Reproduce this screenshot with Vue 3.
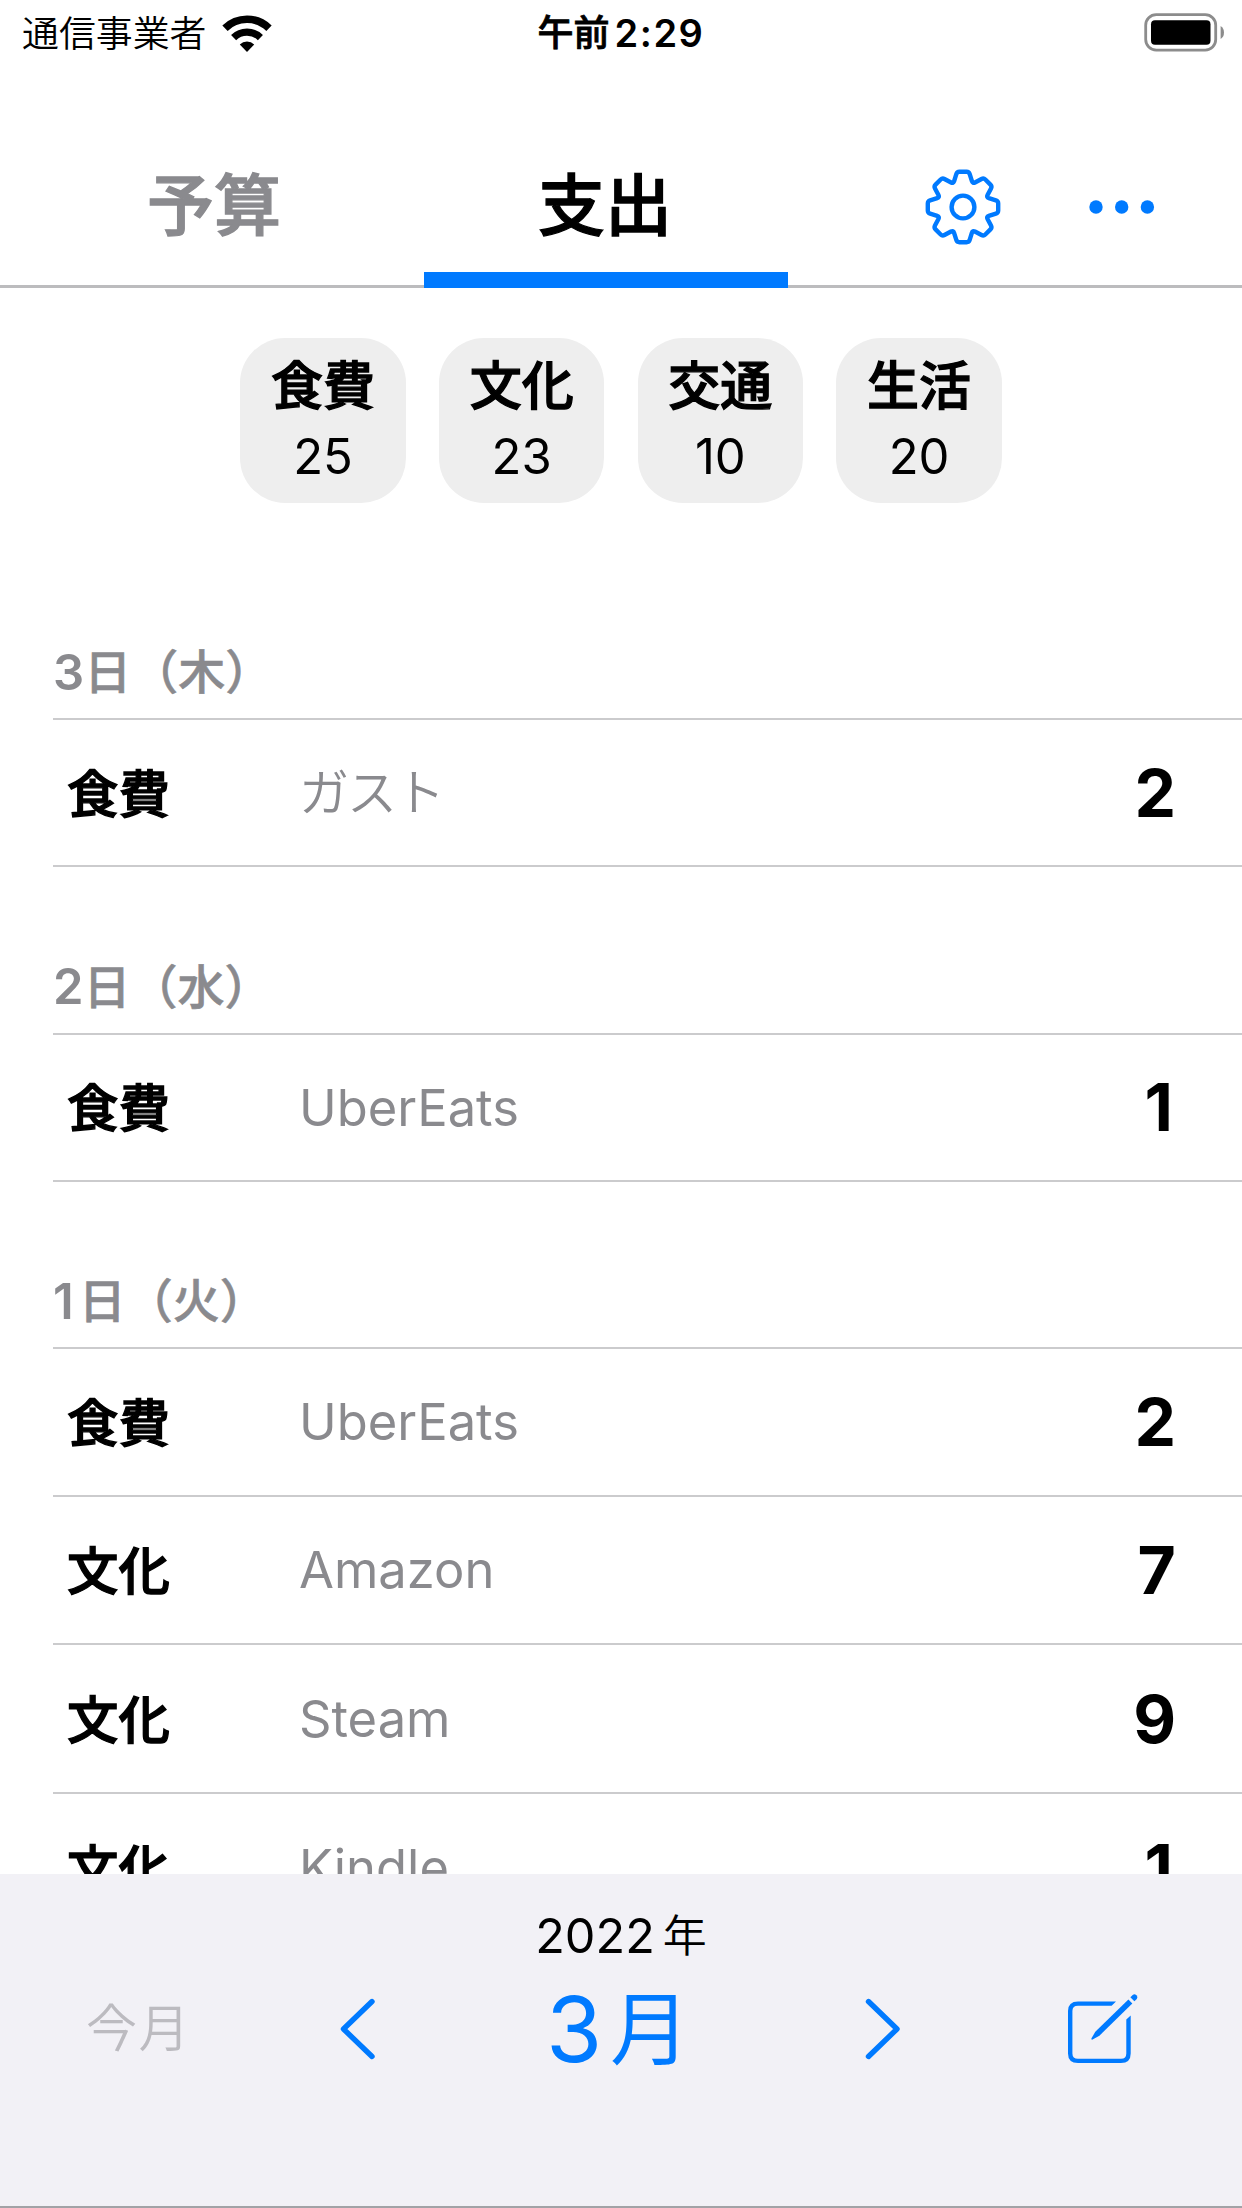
<script setup>
const chips = [
  { name: '食費', total: 25 },
  { name: '文化', total: 23 },
  { name: '交通', total: 10 },
  { name: '生活', total: 20 },
]

const days = [
  { day: '3', week: '木', items: [{ category: '食費', memo: 'ガスト', kana: true, amount: 2 }] },
  { day: '2', week: '水', items: [{ category: '食費', memo: 'UberEats', amount: 1 }] },
  {
    day: '1',
    week: '火',
    items: [
      { category: '食費', memo: 'UberEats', amount: 2 },
      { category: '文化', memo: 'Amazon', amount: 7 },
      { category: '文化', memo: 'Steam', amount: 9 },
      { category: '文化', memo: 'Kindle', amount: 1 },
    ],
  },
]

// Closed outline through the gear's corners, each one rounded off by a quadratic curve
function gearPath() {
  const corners = []
  for (let k = 0; k < 8; k++) {
    const a = (k * Math.PI) / 4
    for (const [x, y, r] of [[-6, -35.2, 2.4], [6, -35.2, 2.4], [9.7, -23.3, 2.6]]) {
      corners.push([x * Math.cos(a) - y * Math.sin(a), x * Math.sin(a) + y * Math.cos(a), r])
    }
  }
  const toward = (p, q) => {
    const d = Math.hypot(q[0] - p[0], q[1] - p[1])
    return [p[0] + ((q[0] - p[0]) * p[2]) / d, p[1] + ((q[1] - p[1]) * p[2]) / d]
  }
  const f = (p) => `${p[0].toFixed(2)} ${p[1].toFixed(2)}`
  const n = corners.length
  return (
    corners
      .map((p, i) => {
        const start = toward(p, corners[(i + n - 1) % n])
        const end = toward(p, corners[(i + 1) % n])
        return `${i ? 'L' : 'M'}${f(start)}Q${f(p)} ${f(end)}`
      })
      .join('') + 'Z'
  )
}
const gear = gearPath()
</script>

<template>
  <div class="screen">
    <header class="status">
      <div class="carrier">
        <span class="carrier-name">通信事業者</span>
        <svg class="wifi" width="50" height="38" viewBox="0 0 50 38">
          <path d="M3 13.2A31.5 31.5 0 0 1 47 13.2" fill="none" stroke="#000" stroke-width="7.6" />
          <path d="M11.6 22.6A19 19 0 0 1 38.4 22.6" fill="none" stroke="#000" stroke-width="7.2" />
          <path d="M25 37L17.8 29.4A10.4 10.4 0 0 1 32.2 29.4Z" />
        </svg>
      </div>
      <div class="clock"><span class="ampm">午前</span><span>2:29</span></div>
      <svg class="battery" width="82" height="40" viewBox="0 0 82 40">
        <rect x="1.7" y="1.7" width="70" height="35.4" rx="10.5" fill="none" stroke="#8c8c8c" stroke-width="2.8" />
        <rect x="7" y="7.2" width="59.5" height="24.6" rx="4" />
        <path d="M76.6 13Q80 15 80 19.5T76.6 26Z" fill="#8c8c8c" />
      </svg>
    </header>

    <nav class="tabs">
      <div class="tab heavy">予算</div>
      <div class="tab heavy active">支出</div>
      <div class="tools">
        <svg width="78" height="78" viewBox="-39 -39 78 78" fill="none" stroke="#007aff" stroke-width="4.4">
          <path :d="gear" stroke-linejoin="round" />
          <circle r="11.4" />
        </svg>
        <svg class="dots" width="66" height="14" viewBox="0 0 66 14" fill="#007aff">
          <circle cx="7" cy="7" r="6.7" />
          <circle cx="32.7" cy="7" r="6.7" />
          <circle cx="58.4" cy="7" r="6.7" />
        </svg>
      </div>
    </nav>

    <div class="chips">
      <div v-for="c in chips" :key="c.name" class="chip">
        <div class="chip-name heavy">{{ c.name }}</div>
        <div class="chip-total">{{ c.total }}</div>
      </div>
    </div>

    <main class="list">
      <section v-for="d in days" :key="d.day" class="day">
        <h2 class="date">
          <span class="num" :class="{ one: d.day === '1' }">{{ d.day }}</span>
          <span class="ja">日（{{ d.week }}）</span>
        </h2>
        <ul class="rows">
          <li v-for="(it, i) in d.items" :key="i" class="row">
            <span class="category heavy">{{ it.category }}</span>
            <span class="memo" :class="{ kana: it.kana }">{{ it.memo }}</span>
            <span class="amount" :class="{ one: it.amount === 1 }">{{ it.amount }}</span>
          </li>
        </ul>
      </section>
    </main>

    <footer class="bar">
      <div class="year"><span>2022</span><span class="year-ja">年</span></div>
      <div class="controls">
        <span class="today">今月</span>
        <svg class="prev" width="38" height="64" viewBox="0 0 38 64">
          <path d="M33 4.5L4.5 32L33 59.5" />
        </svg>
        <div class="month"><span>3</span><span class="month-ja">月</span></div>
        <svg class="next" width="38" height="64" viewBox="0 0 38 64">
          <path d="M4.5 4.5L33 32L4.5 59.5" />
        </svg>
        <svg class="compose" width="74" height="72" viewBox="0 0 74 72">
          <path d="M50 8.4H12Q2 8.4 2 18V60.5Q2 70 12 70H55Q64.7 70 64.7 60.5V22.5L60.3 26.6V60.5Q60.3 65.8 55 65.8H12Q6.4 65.8 6.4 60.5V18Q6.4 12.7 12 12.7H45.6Z" />
          <path d="M62.4 6.6L66.3 10.5L33.4 42.7L26.6 46.6Q25 47 25.5 45.3L29.3 38.8Z" />
          <path d="M64.4 4.3L66.7 2Q68.5 0.6 70.4 2.2Q72.3 4 70.8 5.9L68.4 8.3Z" />
        </svg>
      </div>
    </footer>
  </div>
</template>

<style>
body {
  background: #fff;
}
</style>

<style scoped>
.screen {
  width: 1242px;
  height: 2208px;
  display: flex;
  flex-direction: column;
  overflow: hidden;
  background: #fff;
  color: #000;
  font-family: Inter, "Noto Sans CJK JP", sans-serif;
  white-space: nowrap;
}
.heavy {
  font-weight: 500;
  -webkit-text-stroke: 1.3px currentColor;
}

.status {
  height: 66px;
  display: grid;
  grid-template-columns: 1fr auto 1fr;
  align-items: center;
  flex: none;
}
.carrier {
  display: flex;
  align-items: center;
  padding-left: 22px;
  gap: 16px;
}
.carrier-name {
  font-size: 36.9px;
  line-height: 64px;
  font-weight: 350;
  padding-top: 1px;
}
.wifi {
  margin-top: 1px;
}
.clock {
  display: flex;
  align-items: center;
  gap: 5px;
  font-size: 38px;
  line-height: 66px;
  font-weight: 600;
  letter-spacing: 1.5px;
}
.ampm {
  font-size: 36px;
  letter-spacing: 0;
  font-weight: 500;
  -webkit-text-stroke: 0.8px currentColor;
}
.battery {
  justify-self: end;
  margin-right: 16px;
}

.tabs {
  height: 222px;
  box-sizing: border-box;
  flex: none;
  display: flex;
  padding-left: 4px;
  border-bottom: 3px solid #bcbcbe;
}
.tab {
  width: 364px;
  height: 222px;
  box-sizing: border-box;
  padding: 90px 2px 0 0;
  margin-right: 56px;
  font-size: 67px;
  line-height: 100px;
  text-align: center;
  color: #8a8a8e;
}
.tab:first-child {
  padding-left: 58px;
}
.tab.active {
  color: #000;
  border-bottom: 16px solid #007aff;
}
.tools {
  display: flex;
  align-items: center;
  padding: 63px 0 0 80px;
  gap: 87px;
}

.chips {
  flex: none;
  display: flex;
  justify-content: center;
  gap: 33.5px;
  padding-top: 50px;
}
.chip {
  width: 165.2px;
  height: 165px;
  border-radius: 45px;
  background: #eee;
  text-align: center;
}
.chip-name {
  padding-top: 11px;
  font-size: 52px;
  line-height: 76px;
}
.chip-total {
  font-size: 49px;
  line-height: 63px;
}

.list {
  flex: 1;
  min-height: 0;
  overflow: hidden;
  padding: 114px 0 0 53px;
}
.day {
  margin-bottom: 64.2px;
}
.date {
  margin: 0;
  height: 101px;
  display: flex;
  align-items: center;
  font-size: 49px;
  font-weight: 600;
  color: #8a8a8e;
}
.num {
  padding-top: 9px;
}
.num.one {
  padding-right: 5px;
}
.ja {
  font-family: "Noto Sans CJK JP", sans-serif;
  font-size: 47px;
  font-weight: 500;
  line-height: 60px;
  -webkit-text-stroke: 0.6px currentColor;
  padding-top: 3px;
}
.rows {
  list-style: none;
  margin: 0;
  padding: 0;
  border-top: 2px solid #cbcbcd;
}
.row {
  height: 148.8px;
  box-sizing: border-box;
  display: flex;
  align-items: center;
  padding: 0 66px 0 14px;
  border-bottom: 2px solid #cbcbcd;
}
.row:first-child {
  height: 147.4px;
}
.category {
  width: 232px;
  font-size: 51.4px;
  padding-bottom: 5px;
}
.memo {
  flex: 1;
  font-size: 50.7px;
  color: #8a8a8e;
}
.kana {
  font-size: 50px;
  font-weight: 350;
  letter-spacing: -2px;
  padding-bottom: 7px;
}
.amount {
  font-size: 66px;
  font-weight: 700;
}
.amount.one {
  padding-right: 3px;
}

.bar {
  height: 334.4px;
  box-sizing: border-box;
  flex: none;
  background: #f2f1f6;
  border-bottom: 2px solid #a2a2a6;
}
.year {
  display: flex;
  justify-content: center;
  align-items: center;
  gap: 8px;
  height: 60px;
  padding-top: 32px;
  font-size: 48.6px;
}
.year-ja {
  font-size: 44px;
  font-weight: 350;
  padding-bottom: 5px;
}
.controls {
  display: flex;
  align-items: center;
  height: 126px;
  padding-left: 86px;
}
.controls svg {
  flex: none;
}
.today {
  width: 253px;
  font-size: 51px;
  font-weight: 350;
  letter-spacing: 1.5px;
  color: #bcbbc0;
  padding-bottom: 8px;
}
.prev,
.next {
  fill: none;
  stroke: #007aff;
  stroke-width: 5.4;
  stroke-linecap: round;
  stroke-linejoin: round;
}
.month {
  width: 487px;
  box-sizing: border-box;
  padding-right: 5px;
  display: flex;
  align-items: center;
  justify-content: center;
  gap: 8px;
  font-size: 91px;
  line-height: 126px;
  color: #007aff;
}
.month-ja {
  font-size: 80px;
}
.compose {
  margin-left: 164px;
  fill: #007aff;
}
</style>
